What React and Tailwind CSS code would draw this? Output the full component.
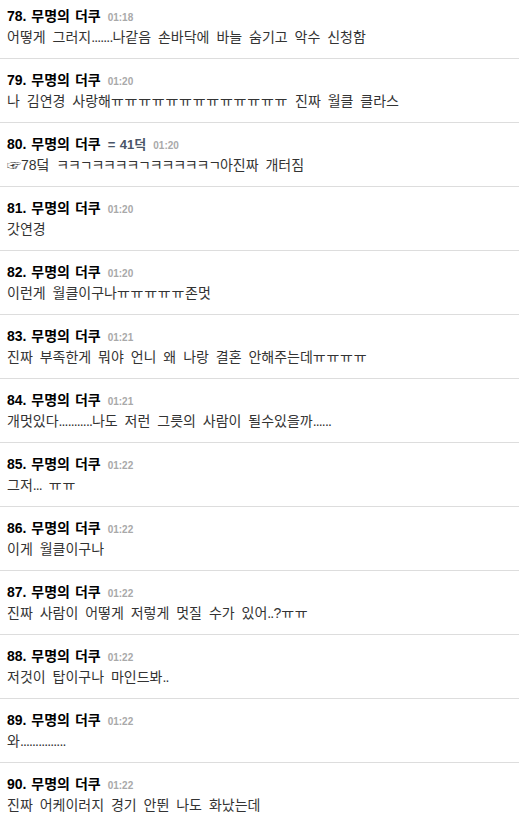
import React from "react";

const rows = [
  { n: 78, t: "01:18", body: "어떻게 그러지.......나같음 손바닥에 바늘 숨기고 악수 신청함" },
  { n: 79, t: "01:20", body: "나 김연경 사랑해ㅠㅠㅠㅠㅠㅠㅠㅠㅠㅠㅠㅠㅠ 진짜 월클 클라스" },
  { n: 80, t: "01:20", extra: "= 41덕", body: "☞78덬 ㅋㅋㄱㅋㅋㅋㅋㄱㅋㅋㅋㅋㅋㄱ아진짜 개터짐" },
  { n: 81, t: "01:20", body: "갓연경" },
  { n: 82, t: "01:20", body: "이런게 월클이구나ㅠㅠㅠㅠㅠ존멋" },
  { n: 83, t: "01:21", body: "진짜 부족한게 뭐야 언니 왜 나랑 결혼 안해주는데ㅠㅠㅠㅠ" },
  { n: 84, t: "01:21", body: "개멋있다...........나도 저런 그릇의 사람이 될수있을까......" },
  { n: 85, t: "01:22", body: "그저... ㅠㅠ" },
  { n: 86, t: "01:22", body: "이게 월클이구나" },
  { n: 87, t: "01:22", body: "진짜 사람이 어떻게 저렇게 멋질 수가 있어..?ㅠㅠ" },
  { n: 88, t: "01:22", body: "저것이 탑이구나 마인드봐.." },
  { n: 89, t: "01:22", body: "와..............." },
  { n: 90, t: "01:22", body: "진짜 어케이러지 경기 안뛴 나도 화났는데" },
];

function Body({ text }) {
  const parts = text.split(/(\.+|ㅠ+|[ㅋㄱ]+)/).filter(Boolean);
  return parts.map((p, i) => {
    if (/^\.+$/.test(p)) return <span key={i} className="tracking-[-0.85px]">{p}</span>;
    if (/^ㅠ+$/.test(p)) return <span key={i} className="tracking-[0.75px]">{p}</span>;
    if (/^[ㅋㄱ]+$/.test(p)) return <span key={i} className="tracking-[-1.2px]">{p}</span>;
    return <span key={i}>{p}</span>;
  });
}

export default function App() {
  return (
    <div
      className="w-[519px] h-[822px] overflow-hidden bg-white"
      style={{ fontFamily: '"Liberation Sans", "Noto Sans CJK KR", sans-serif' }}
    >
      <div className="-mt-[5px]">
        {rows.map((r, i) => (
          <div
            key={r.n}
            className={`px-[7px] pt-[11px] pb-[11px] h-[64px] ${i < rows.length - 1 ? "border-b border-[#dddddd]" : ""}`}
          >
            <div className="flex items-baseline h-[20px] leading-[20px]">
              <span className="text-[14px] font-bold text-black [word-spacing:1px]">{r.n}. 무명의 더쿠</span>
              {r.extra && (
                <span className="ml-[7px] text-[13px] font-bold text-[#4a5568] [word-spacing:1px]">{r.extra}</span>
              )}
              <span className="ml-[7px] text-[10px] font-bold text-[#a9a9a9]">{r.t}</span>
            </div>
            <div className="mt-[1px] text-[14px] leading-[21px] text-[#333333] whitespace-nowrap [word-spacing:3px]">
              <Body text={r.body} />
            </div>
          </div>
        ))}
      </div>
    </div>
  );
}
